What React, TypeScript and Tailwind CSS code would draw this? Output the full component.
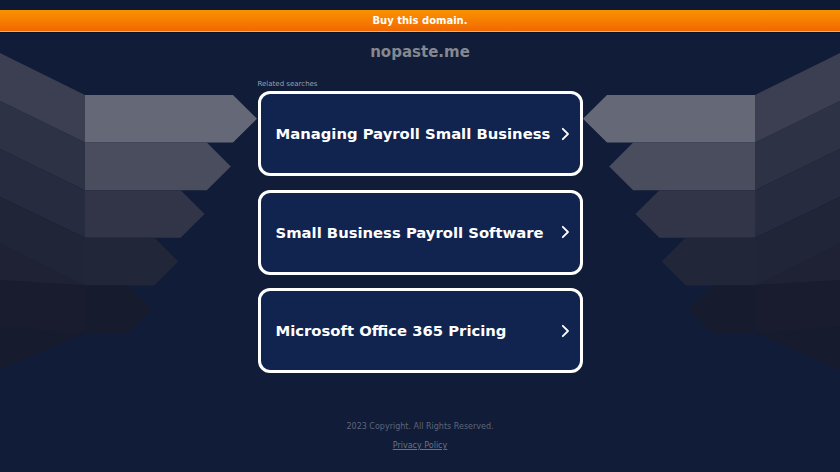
import React from "react";

const bands = [0, 1, 2, 3, 4].map((i) => {
  const t = 95 + 47.6 * i;
  const b = t + 47.6;
  const tip = 257 - 26.2 * i;
  const e = tip - 24;
  return { i, t, b, tip, e };
});

const rectColors = ["#656876", "#4a4d5e", "#323548", "#222639", "#171b2e"];
const leftColors = ["#3b3f51", "#2e3245", "#272b3f", "#1f2337", "#171b2e"];
const leftTop = [53, 101, 149, 197, 243];
const leftBot = [101, 149, 197, 243, 370];

function Side() {
  return (
    <g>
      {bands.map(({ i, t, b, tip, e }) => (
        <g key={i}>
          <polygon
            points={`0,${leftTop[i]} 85,${t} 85,${b} 0,${leftBot[i]}`}
            fill={leftColors[i]}
          />
          <polygon
            points={`85,${t} ${e},${t} ${tip},${(t + b) / 2} ${e},${b} 85,${b}`}
            fill={rectColors[i]}
          />
        </g>
      ))}
      <polygon points="0,243 85,285 85,333 0,327" fill="#1a1e31" opacity="0.6" />
      <polygon points="0,197 85,238 85,285 0,280" fill="#232739" opacity="0.5" />
    </g>
  );
}

function Chevron() {
  return (
    <svg width="10" height="14" viewBox="0 0 10 14" className="shrink-0">
      <path d="M2.8 1.8 L8 7 L2.8 12.2" fill="none" stroke="#ffffff" strokeWidth="1.8" strokeLinecap="round" strokeLinejoin="round" />
    </svg>
  );
}

const items = [
  "Managing Payroll Small Business",
  "Small Business Payroll Software",
  "Microsoft Office 365 Pricing",
];

export default function App() {
  return (
    <div
      className="relative w-[840px] h-[472px] overflow-hidden bg-[#101c38]"
      style={{ fontFamily: '"DejaVu Sans", sans-serif' }}
    >
      <svg className="absolute inset-0" width="840" height="472" viewBox="0 0 840 472">
        <Side />
        <g transform="translate(840,0) scale(-1,1)">
          <Side />
        </g>
      </svg>
      <div className="relative flex flex-col items-center">
        <div className="w-full h-[10px] bg-[#0e1a33]" />
        <div className="w-full h-[21px] bg-gradient-to-b from-[#f99200] to-[#f26800] flex items-center justify-center">
          <span className="text-white font-bold text-[10px] leading-none">Buy this domain.</span>
        </div>
        <div className="w-full h-px bg-[#d6b29c]" />
        <div className="w-full h-px bg-[#0a1228]" />
        <div className="mt-[9px] h-[20px] leading-[20px] text-[15px] font-bold text-[#85888f]">nopaste.me</div>
        <div className="w-[325px] mt-[18px]">
          <div className="text-[7px] leading-[8px] text-[#9aa0ab]">Related searches</div>
          <div className="mt-[3px] flex flex-col gap-[13.5px]">
            {items.map((t) => (
              <div
                key={t}
                className="h-[85px] rounded-[12px] border-[3px] border-white bg-[#10244f] flex items-center justify-between pl-[15px] pr-[10px]"
              >
                <span className="text-white font-bold text-[14.8px] leading-[20px] pt-px">{t}</span>
                <Chevron />
              </div>
            ))}
          </div>
        </div>
        <div className="mt-[49px] text-[8px] leading-[10px] text-[#5f6678]">2023 Copyright. All Rights Reserved.</div>
        <div className="mt-[9px] text-[8px] leading-[10px] text-[#6b7284] underline">Privacy Policy</div>
      </div>
    </div>
  );
}
